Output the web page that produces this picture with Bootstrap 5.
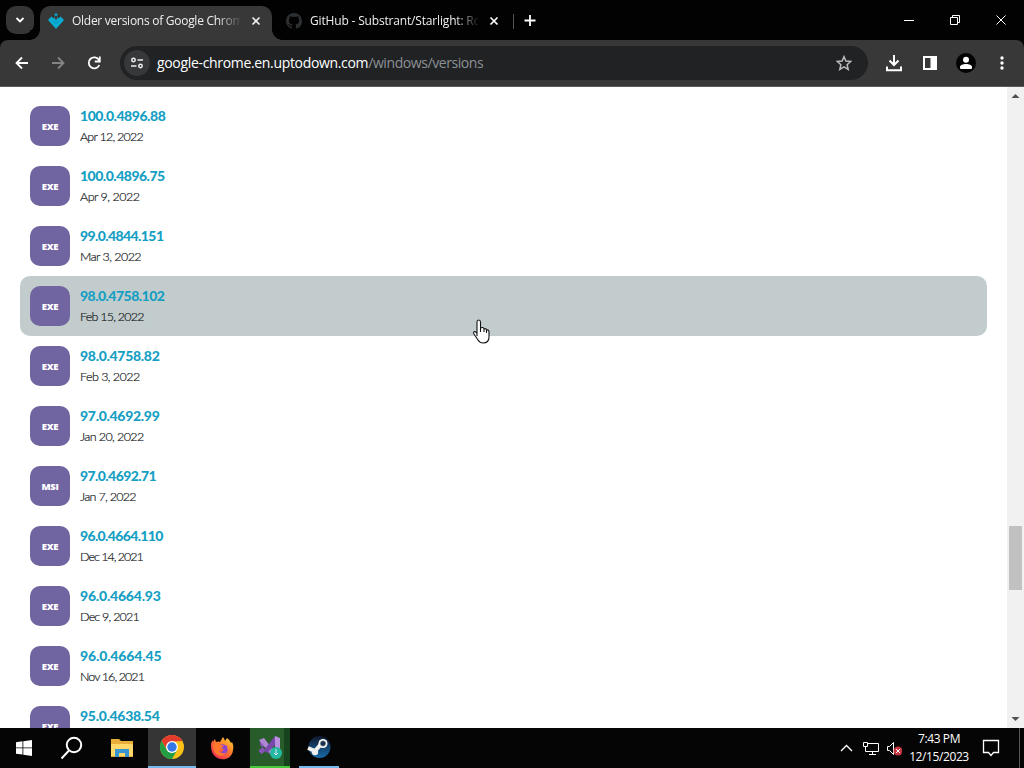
<!DOCTYPE html>
<html lang="en">
<head>
<meta charset="utf-8">
<title>Older versions of Google Chrome</title>
<link href="https://cdn.jsdelivr.net/npm/bootstrap@5.3.0/dist/css/bootstrap.min.css" rel="stylesheet">
<style>
body{width:1024px;height:768px;background:#fff;font-family:"Open Sans","Noto Sans",sans-serif;font-size:12px;line-height:16px}
svg{display:block;flex:none}
.tabstrip{height:40px;background:#020202;color:#eee}
.tab-search{width:28px;height:28px;margin:6px 6px 0 6px;border-radius:10px;background:#353535}
.browser-tab{height:34px;margin-top:6px;position:relative}
.tab-current{width:232px;background:#383838;border-radius:10px 10px 0 0;padding-left:8px}
.tab-current::before,.tab-current::after{content:"";position:absolute;bottom:0;width:10px;height:10px}
.tab-current::before{left:-10px;background:radial-gradient(circle at 0 0,#020202 9.5px,#383838 10px)}
.tab-current::after{right:-10px;background:radial-gradient(circle at 100% 0,#020202 9.5px,#383838 10px)}
.tab-label{width:168px;font-size:12px;line-height:17px;margin-bottom:5px;-webkit-mask-image:linear-gradient(90deg,#000 145px,transparent 170px)}
.tab-current .tab-label{letter-spacing:-.27px}
.tab-other .tab-label{letter-spacing:-.17px}
.tab-other{width:228px;margin-left:14px}
.tab-rule{width:1px;height:15px;background:#555}
.toolbar{height:47px;background:#383838;border-bottom:1px solid #5b5b5b;border-radius:8px 8px 0 0;color:#fff}
.chrome-head{background:#020202}
.omnibox{width:748px;height:34px;background:#202224;border-radius:17px;padding:0 16px 0 4px}
.site-info{width:26px;height:26px;border-radius:50%;background:#37383a}
.address{font-size:14px;letter-spacing:-.33px;line-height:20px;margin-left:7px}
.address-path{color:#8d9194;letter-spacing:-.42px}
.viewport{height:641px}
.versions{padding:9px 20px 0;width:1007px}
.version-row{height:60px;width:967px;padding:10px;border-radius:10px;gap:10px}
.version-row.hovered{background:#c2cccd}
.file-kind{width:40px;height:40px;border-radius:10px;background:#7165a1;color:#fff;font:800 9.5px/41px "Open Sans",sans-serif;letter-spacing:-.3px;text-align:center}
.version-number{font:900 14px/20px Lato,sans-serif;letter-spacing:var(--number-gap,-.3px);color:#169fc3;white-space:nowrap}
.version-date{font:300 12.5px/22px Lato,sans-serif;letter-spacing:var(--date-gap,-.55px);color:#101214;-webkit-text-stroke:.2px #24282c;white-space:nowrap}
.version-row:nth-child(1){--number-gap:-.45px;--date-gap:-.78px}
.version-row:nth-child(2){--number-gap:-.5px;--date-gap:-.5px}
.version-row:nth-child(3){--number-gap:-.6px}
.version-row:nth-child(4){--number-gap:-.53px;--date-gap:-.78px}
.version-row:nth-child(6){--date-gap:-.6px}
.version-row:nth-child(7){--number-gap:-.58px;--date-gap:-.7px}
.version-row:nth-child(8){--number-gap:-.65px;--date-gap:-1px}
.version-row:nth-child(9){--number-gap:-.2px;--date-gap:-.78px}
.version-row:nth-child(10){--number-gap:-.13px;--date-gap:-.92px}
.scroller{width:17px;background:#f1f1f1;position:relative}
.scroller-thumb{position:absolute;left:2px;top:439px;width:13px;height:64px;background:#c1c1c1}
.pointer-hand{position:absolute;left:471px;top:319px}
.taskbar{height:40px;background:#050505;color:#fff}
.task{height:40px;width:48px;display:flex;align-items:center;justify-content:center}
.task-active{background:#353535;border-bottom:2px solid #76b9ed}
.task-build{width:40px;margin-left:6px;background:linear-gradient(90deg,#285d2b 34px,#17441c 34px);border-bottom:2px solid #46c83b}
.task-open{width:40px;margin-left:9px;border-bottom:2px solid #76b9ed}
.clock{width:66px;font-size:12px;line-height:18px;letter-spacing:-.4px;text-align:center;white-space:nowrap}
.desktop-edge{width:1px;background:#555}
</style>
</head>
<body class="overflow-hidden position-relative">
<header class="chrome-head">
<div class="tabstrip d-flex">
  <div class="tab-search d-flex align-items-center justify-content-center"><svg width="10" height="8" viewBox="0 0 10 8"><path d="m1.500 2 3.500 3.500L8.500 2" fill="none" stroke="#fff" stroke-width="1.800"/></svg></div>
  <div class="browser-tab tab-current d-flex align-items-center">
    <svg class="mb-1" width="16" height="16" viewBox="0 0 16 16"><path d="m8 0 1.800 1.800L8 3.600 6.200 1.800ZM3.500 3.500 5.500 5.500 7 4v2l1 1 1-1V4l1.500 1.500 2-2L16 7l-8 9-8-9Z" fill="#08add1"/><path d="m5 6 3 3 3-3v2l-3 3-3-3Z" fill="#079bc5"/></svg>
    <span class="tab-label text-nowrap overflow-hidden ms-2">Older versions of Google Chrom</span>
    <svg class="ms-2 mb-1" width="16" height="16"><path d="m4.500 4.500 7 7m0-7-7 7" stroke="#eee" stroke-width="1.600"/></svg>
  </div>
  <div class="browser-tab tab-other d-flex align-items-center">
    <svg class="mb-1" width="16" height="16" viewBox="0 0 16 16" fill="#2d3033"><path d="M8 0C3.580 0 0 3.580 0 8c0 3.540 2.290 6.530 5.470 7.590.4.070.55-.17.55-.38v-1.500c-2.230.48-2.700-1.070-2.700-1.070-.36-.92-.89-1.170-.89-1.170-.73-.5.050-.49.050-.49.81.06 1.230.83 1.230.83.72 1.230 1.880.87 2.340.67.070-.52.28-.87.51-1.070-1.780-.2-3.640-.89-3.640-3.950 0-.88.31-1.590.82-2.150-.08-.2-.36-1.020.08-2.120 0 0 .67-.21 2.200.82A7.700 7.700 0 0 1 8 3.750c.68 0 1.360.09 2 .27 1.530-1.040 2.200-.82 2.200-.82.44 1.100.16 1.920.08 2.120.51.56.82 1.270.82 2.150 0 3.070-1.870 3.750-3.650 3.950.29.25.54.73.54 1.480v2.310c0 .21.15.46.55.38A8 8 0 0 0 16 8c0-4.420-3.580-8-8-8Z"/></svg>
    <span class="tab-label text-nowrap overflow-hidden ms-2">GitHub - Substrant/Starlight: Ro</span>
    <svg class="ms-2 mb-1" width="16" height="16"><path d="m4.500 4.500 7 7m0-7-7 7" stroke="#fff" stroke-width="1.700"/></svg>
    <span class="tab-rule ms-auto mb-1"></span>
  </div>
  <svg class="ms-2" width="20" height="40"><path d="M8 15v11M2.500 20.500h11" stroke="#fff" stroke-width="1.800"/></svg>
  <svg class="ms-auto" width="138" height="40" fill="none" stroke="#fff"><path d="M18 20.500h10M64.500 17.500h7v7h-7zM66.500 17v-1.500h7v7H72M110.500 15.500l9 9m0-9-9 9"/></svg>
</div>
<div class="toolbar d-flex align-items-center">
  <svg width="120" height="46" fill="none" stroke-width="1.800"><path d="M28 23H17m5-5.500L16.500 23l5.500 5.500" stroke="#fff"/><path d="M52 23h11m-5-5.500 5.500 5.500-5.500 5.500" stroke="#858585"/><path d="M99 20A5.500 5.500 0 1 0 99.300 25M99.800 16.500v5h-5" stroke="#fff"/></svg>
  <div class="omnibox d-flex align-items-center">
    <span class="site-info d-flex align-items-center justify-content-center"><svg width="14" height="12" fill="none" stroke="#eee" stroke-width="1.500"><circle cx="3.500" cy="3" r="1.700"/><path d="M7.500 3H13M1 9h5.500"/><circle cx="10.500" cy="9" r="1.700"/></svg></span>
    <span class="address text-nowrap">google-chrome.en.uptodown.com<span class="address-path">/windows/versions</span></span>
    <svg class="ms-auto" width="16" height="16" viewBox="0 0 16 16"><path d="m8 1.700 1.900 4.400 4.800.4-3.600 3.200 1.100 4.700L8 11.900l-4.200 2.500 1.100-4.700-3.600-3.200 4.800-.4Z" fill="none" stroke="#bbb" stroke-width="1.500"/></svg>
  </div>
  <svg width="156" height="46" fill="none" stroke="#fff"><path d="M26 15v10m-4.500-4.500L26 25l4.500-4.500M19 26.500v3.700h14v-3.700" stroke-width="2"/><path d="M56 17h12v12H56z" stroke-width="2"/><path d="M63 17h5v12h-5z" fill="#fff"/><circle cx="98" cy="23" r="10" fill="#030303" stroke="none"/><circle cx="98" cy="19.800" r="3" fill="#fff" stroke="none"/><path d="M92 28v-1c0-4 12-4 12 0v1q0 1-1 1H93q-1 0-1-1Z" fill="#fff" stroke="none"/><g fill="#fff" stroke="none"><circle cx="134" cy="18" r="1.700"/><circle cx="134" cy="23" r="1.700"/><circle cx="134" cy="28" r="1.700"/></g></svg>
</div>
</header>
<main class="viewport d-flex overflow-hidden">
  <div class="versions">
    <div class="version-row d-flex"><span class="file-kind">EXE</span><div><div class="version-number">100.0.4896.88</div><div class="version-date">Apr 12, 2022</div></div></div>
    <div class="version-row d-flex"><span class="file-kind">EXE</span><div><div class="version-number">100.0.4896.75</div><div class="version-date">Apr 9, 2022</div></div></div>
    <div class="version-row d-flex"><span class="file-kind">EXE</span><div><div class="version-number">99.0.4844.151</div><div class="version-date">Mar 3, 2022</div></div></div>
    <div class="version-row hovered d-flex"><span class="file-kind">EXE</span><div><div class="version-number">98.0.4758.102</div><div class="version-date">Feb 15, 2022</div></div></div>
    <div class="version-row d-flex"><span class="file-kind">EXE</span><div><div class="version-number">98.0.4758.82</div><div class="version-date">Feb 3, 2022</div></div></div>
    <div class="version-row d-flex"><span class="file-kind">EXE</span><div><div class="version-number">97.0.4692.99</div><div class="version-date">Jan 20, 2022</div></div></div>
    <div class="version-row d-flex"><span class="file-kind">MSI</span><div><div class="version-number">97.0.4692.71</div><div class="version-date">Jan 7, 2022</div></div></div>
    <div class="version-row d-flex"><span class="file-kind">EXE</span><div><div class="version-number">96.0.4664.110</div><div class="version-date">Dec 14, 2021</div></div></div>
    <div class="version-row d-flex"><span class="file-kind">EXE</span><div><div class="version-number">96.0.4664.93</div><div class="version-date">Dec 9, 2021</div></div></div>
    <div class="version-row d-flex"><span class="file-kind">EXE</span><div><div class="version-number">96.0.4664.45</div><div class="version-date">Nov 16, 2021</div></div></div>
    <div class="version-row d-flex"><span class="file-kind">EXE</span><div><div class="version-number">95.0.4638.54</div></div></div>
  </div>
  <div class="scroller d-flex flex-column justify-content-between"><svg width="17" height="17"><path d="m4.500 11 4-4 4 4Z" fill="#505050"/></svg><div class="scroller-thumb"></div><svg width="17" height="17"><path d="m4.500 6 4 4 4-4Z" fill="#505050"/></svg></div>
</main>
<footer class="taskbar d-flex">
  <div class="task"><svg width="16" height="16" viewBox="0 0 16 16" fill="#fff"><path d="m0 2.300 6.500-1v6.200H0zM7.300 1.200 16 0v7.500H7.300zM0 8.300h6.500v6.300L0 13.700zM7.300 8.300H16V16l-8.700-1.200z"/></svg></div>
  <div class="task"><svg width="24" height="24" fill="none" stroke="#fff" stroke-width="2"><circle cx="14" cy="9" r="7.200"/><path d="m9 14.500-7.500 8"/></svg></div>
  <div class="task me-1"><svg class="ms-1" width="22" height="18" viewBox="0 0 22 18"><path d="M0 0h8l2 2h12v16H0z" fill="#e8ad3a"/><path d="M0 5h22v12H0z" fill="#ffd76a"/><path d="M4 18V10h14v8h-4v-4H8v4Z" fill="#3995d1"/></svg></div>
  <div class="task task-active"><svg width="24" height="24" viewBox="0 0 24 24"><circle cx="12" cy="12" r="12" fill="#fbc116"/><path d="M1.600 6A12 12 0 0 1 22.400 6L12 6.500 7 15Z" fill="#e33b2e"/><path d="M1.600 6A12 12 0 0 0 12 24l5.200-9L12 18l-5.200-3Z" fill="#249e45"/><circle cx="12" cy="12" r="6" fill="#fff"/><circle cx="12" cy="12" r="4.700" fill="#3478e5"/></svg></div>
  <div class="task"><svg class="ms-1" width="24" height="24" viewBox="0 0 24 24"><defs><linearGradient id="flame" x1="1" y1="0" x2=".2" y2="1"><stop stop-color="#ffe335"/><stop offset=".48" stop-color="#ff792b"/><stop offset="1" stop-color="#ef245c"/></linearGradient></defs><path d="M1 10q0-4 2-6v2l2-3 1 3q2-1 4 0l3-5q1 1 2 4l2-3q3 2 4 5l1-1q2 4 1 8c-1 13-22 13-22-4z" fill="url(#flame)"/><path d="M7 11q4-5 10-1 2 8-4 9-5 0-6-4l5 1 2-3z" fill="#8c46cf"/><path d="M3 9q5-4 8 0l3 1-4 3-1 2q4 4 7 1-3 6-9 3-4-3-4-10" fill="#ff772c"/></svg></div>
  <div class="task task-build"><svg width="26" height="26" viewBox="0 0 26 26"><path d="m3 7 3-1 15 13-2 3-4 0L3 11zM2 18l3 2 5-5-3-3-5 4z" fill="#8654b6"/><path d="m2 6 5-2 13 17-5 1z" fill="#af86d4"/><path d="m18 2 5 2v18l-5 2z" fill="#bb91df"/><path d="M18 2v9l-8 8-3-3z" fill="#7749aa"/><circle cx="19" cy="19" r="6" fill="#24baa0"/><path d="M19 15v6m-2-2 2 2 2-2" stroke="#ddf" fill="none"/></svg></div>
  <div class="task task-open"><svg width="24" height="24" viewBox="0 0 24 24"><defs><linearGradient id="steam" x2="0" y2="1"><stop stop-color="#11172b"/><stop offset="1" stop-color="#176baa"/></linearGradient></defs><circle cx="12.500" cy="12" r="11" fill="url(#steam)"/><path d="m1 13 7 3 7-8" stroke="#eee" stroke-width="4" fill="none"/><circle cx="8" cy="17" r="3.200" fill="#eee"/><circle cx="16" cy="8.500" r="4.500" fill="#fff"/><circle cx="16" cy="8.500" r="2.800" fill="#17304f" stroke="#aaa" stroke-width=".7"/></svg></div>
  <div class="ms-auto d-flex align-items-center">
    <svg width="69" height="40" fill="none" stroke="#fff"><path d="m8 23 5.500-5.500L19 23" stroke-width="1.400"/><path d="M34.500 15.500h11v8H32.500v-4M36 26.500h7m-3.500-3v3M30.500 14.500h4v4h-4zM32.500 18v5"/><path d="M54.500 18.500h2l4-4v12l-4-4h-2z"/><circle cx="65" cy="23" r="4.500" fill="#c53540" stroke="none"/><path d="m63 21 4 4m0-4-4 4"/></svg>
    <div class="clock ms-1">7:43 PM<br>12/15/2023</div>
    <svg width="47" height="40" fill="none" stroke="#fff"><path d="M11.500 12.500h15v12h-5L19 27.500l-2.500-3h-5z" stroke-width="1.300"/></svg>
    <span class="desktop-edge align-self-stretch"></span><span class="ps-1"></span>
  </div>
</footer>
<svg class="pointer-hand" width="20" height="27" viewBox="0 0 20 27"><path d="M6 17V3q0-2 1.700-2T9.500 3v6q3-1.500 3.500 1 2.200-1 2.500 1 2.500-.5 2.500 2v5q0 6-6 6-3 0-5-3l-4-6q-1-2 .5-2.500 1-.3 2.500 2M9.500 9v4m3.500-3v3m2.500-2v3" fill="#fff" stroke="#111" stroke-width="1.100"/></svg>
<script src="https://cdn.jsdelivr.net/npm/bootstrap@5.3.0/dist/js/bootstrap.bundle.min.js"></script>
</body>
</html>
